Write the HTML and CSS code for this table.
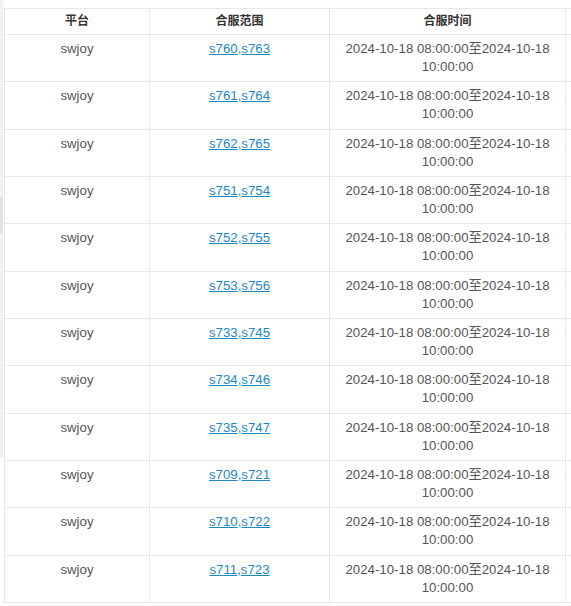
FILE: index.html
```html
<!DOCTYPE html>
<html lang="zh">
<head>
<meta charset="utf-8">
<title>合服列表</title>
<link rel="stylesheet" href="styles.css">
</head>
<body>
<div class="page">
  <div class="side"><div class="side-thumb"></div></div>
  <div class="main">
    <div class="table">
      <div class="row head">
        <div class="cell">平台</div>
        <div class="cell">合服范围</div>
        <div class="cell">合服时间</div>
        <div class="cell"></div>
      </div>
      <div class="row"><div class="cell">swjoy</div><div class="cell"><a href="#">s760</a>,<a href="#">s763</a></div><div class="cell">2024-10-18 08:00:00至2024-10-18 10:00:00</div><div class="cell"></div></div>
      <div class="row"><div class="cell">swjoy</div><div class="cell"><a href="#">s761</a>,<a href="#">s764</a></div><div class="cell">2024-10-18 08:00:00至2024-10-18 10:00:00</div><div class="cell"></div></div>
      <div class="row"><div class="cell">swjoy</div><div class="cell"><a href="#">s762</a>,<a href="#">s765</a></div><div class="cell">2024-10-18 08:00:00至2024-10-18 10:00:00</div><div class="cell"></div></div>
      <div class="row"><div class="cell">swjoy</div><div class="cell"><a href="#">s751</a>,<a href="#">s754</a></div><div class="cell">2024-10-18 08:00:00至2024-10-18 10:00:00</div><div class="cell"></div></div>
      <div class="row"><div class="cell">swjoy</div><div class="cell"><a href="#">s752</a>,<a href="#">s755</a></div><div class="cell">2024-10-18 08:00:00至2024-10-18 10:00:00</div><div class="cell"></div></div>
      <div class="row"><div class="cell">swjoy</div><div class="cell"><a href="#">s753</a>,<a href="#">s756</a></div><div class="cell">2024-10-18 08:00:00至2024-10-18 10:00:00</div><div class="cell"></div></div>
      <div class="row"><div class="cell">swjoy</div><div class="cell"><a href="#">s733</a>,<a href="#">s745</a></div><div class="cell">2024-10-18 08:00:00至2024-10-18 10:00:00</div><div class="cell"></div></div>
      <div class="row"><div class="cell">swjoy</div><div class="cell"><a href="#">s734</a>,<a href="#">s746</a></div><div class="cell">2024-10-18 08:00:00至2024-10-18 10:00:00</div><div class="cell"></div></div>
      <div class="row"><div class="cell">swjoy</div><div class="cell"><a href="#">s735</a>,<a href="#">s747</a></div><div class="cell">2024-10-18 08:00:00至2024-10-18 10:00:00</div><div class="cell"></div></div>
      <div class="row"><div class="cell">swjoy</div><div class="cell"><a href="#">s709</a>,<a href="#">s721</a></div><div class="cell">2024-10-18 08:00:00至2024-10-18 10:00:00</div><div class="cell"></div></div>
      <div class="row"><div class="cell">swjoy</div><div class="cell"><a href="#">s710</a>,<a href="#">s722</a></div><div class="cell">2024-10-18 08:00:00至2024-10-18 10:00:00</div><div class="cell"></div></div>
      <div class="row"><div class="cell">swjoy</div><div class="cell"><a href="#">s711</a>,<a href="#">s723</a></div><div class="cell">2024-10-18 08:00:00至2024-10-18 10:00:00</div><div class="cell"></div></div>
    </div>
  </div>
</div>
</body>
</html>
```
FILE: styles.css
```css
html, body {
  margin: 0;
  padding: 0;
  overflow: hidden;
  background: #fff;
}
body {
  width: 571px;
  height: 606px;
  font-family: "Liberation Sans", Arial, "Noto Sans CJK SC", sans-serif;
  font-size: 13.25px;
  color: #555;
}
.page {
  display: flex;
  height: 606px;
}
.side {
  width: 3px;
  flex: none;
  height: 458px;
  background: #f2f2f2;
  padding-top: 197px;
  box-sizing: border-box;
}
.side-thumb {
  height: 36px;
  background: #e2e2e2;
}
.main {
  flex: none;
  width: 567px;
  overflow: hidden;
  padding-top: 8px;
  padding-left: 1px;
}
.table {
  border-top: 1px solid #e8e8e8;
  border-left: 1px solid #e8e8e8;
  width: 572px;
}
.row {
  display: grid;
  grid-template-columns: 145px 180px 236px 10px;
  height: 47.333px;
}
.row.head {
  height: 26px;
}
.cell {
  box-sizing: border-box;
  border-right: 1px solid #e8e8e8;
  border-bottom: 1px solid #e8e8e8;
  text-align: center;
  line-height: 18px;
  padding: 5px 8px 0;
  overflow: hidden;
}
.head .cell {
  font-size: 12px;
  font-weight: bold;
  color: #333;
  padding-top: 3px;
  line-height: 18.667px;
}
.cell a {
  color: #1e88c7;
  text-decoration: underline;
}
.row .cell:nth-child(2) {
  color: #1e88c7;
}
.head .cell:nth-child(2) {
  color: #333;
}
```
